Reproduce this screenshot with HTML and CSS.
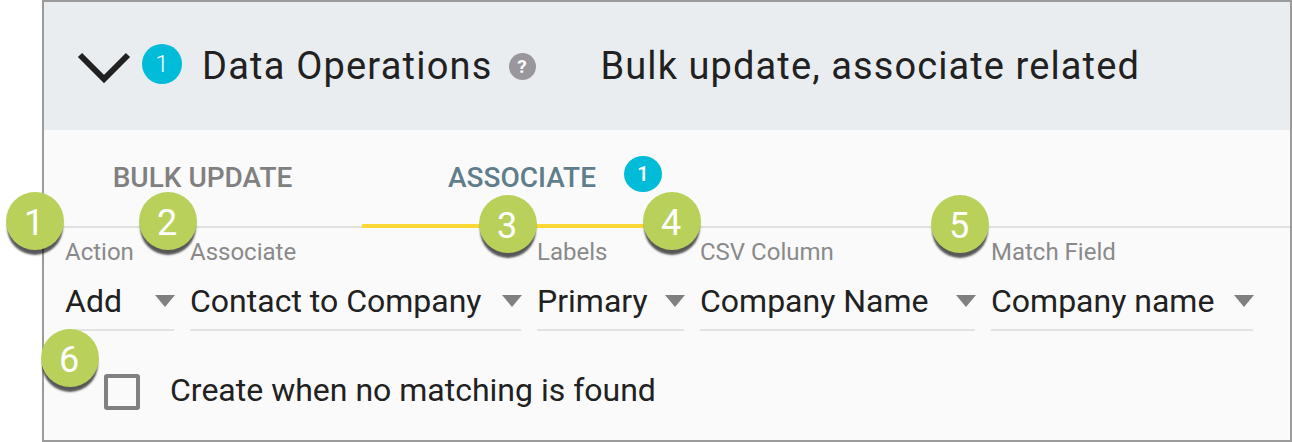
FILE: index.html
```html
<!DOCTYPE html>
<html lang="en">
<head>
	<meta charset="UTF-8">
	<title>Data Operations</title>
	<link rel="stylesheet" href="styles.css">
</head>
<body>
	<div class="panel">
		<div class="panel-head">
			<svg class="chevron" width="54" height="32" viewBox="0 0 54 32"><path d="M3 3 L27 27 L51 3" fill="none" stroke="#212121" stroke-width="6"/></svg>
			<span class="count count-lg">1</span>
			<span class="title">Data Operations</span>
			<span class="help">?</span>
			<span class="summary">Bulk update, associate related</span>
		</div>
		<div class="panel-body">
			<div class="tabs">
				<div class="tab tab-bulk">BULK UPDATE</div>
				<div class="tab tab-assoc active">ASSOCIATE<span class="count count-sm">1</span></div>
			</div>
			<div class="fields">
				<div class="field field-action">
					<label>Action</label>
					<div class="select"><span>Add</span><i class="caret"></i></div>
				</div>
				<div class="field field-assoc">
					<label>Associate</label>
					<div class="select"><span>Contact to Company</span><i class="caret"></i></div>
				</div>
				<div class="field field-labels">
					<label>Labels</label>
					<div class="select"><span>Primary</span><i class="caret"></i></div>
				</div>
				<div class="field field-csv">
					<label>CSV Column</label>
					<div class="select"><span>Company Name</span><i class="caret"></i></div>
				</div>
				<div class="field field-match">
					<label>Match Field</label>
					<div class="select"><span>Company name</span><i class="caret"></i></div>
				</div>
			</div>
			<div class="check-row">
				<span class="checkbox"></span>
				<span class="check-text">Create when no matching is found</span>
			</div>
		</div>
	</div>

	<div class="callout c1">1</div>
	<div class="callout c2">2</div>
	<div class="callout c3">3</div>
	<div class="callout c4">4</div>
	<div class="callout c5">5</div>
	<div class="callout c6">6</div>
</body>
</html>
```
FILE: styles.css
```css
* {
	margin: 0;
	padding: 0;
	box-sizing: border-box;
}
html, body {
	height: 100%;
	background: #fff;
	overflow: hidden;
}
body {
	font-family: Roboto, "Liberation Sans", sans-serif;
	position: relative;
}

.panel {
	width: 1250px;
	height: 442px;
	margin-left: 42px;
	border: 2px solid #9b9b9b;
	background: #fafafa;
	display: flex;
	flex-direction: column;
}

/* header */
.panel-head {
	height: 128px;
	background: #e9edf0;
	display: flex;
	align-items: center;
	padding-left: 33px;
}
.chevron {
	margin-top: 4px;
}
.count {
	display: inline-flex;
	align-items: center;
	justify-content: center;
	background: #00bcd9;
	color: #fff;
	border-radius: 50%;
}
.count-lg {
	width: 40px;
	height: 40px;
	font-size: 24px;
	font-weight: 300;
	margin-left: 11px;
	margin-top: -4px;
}
.title {
	font-size: 38px;
	color: #212121;
	margin-left: 20px;
	letter-spacing: 1.2px;
	white-space: nowrap;
}
.help {
	width: 27px;
	height: 27px;
	border-radius: 50%;
	background: #9a979c;
	color: #fff;
	font-size: 19px;
	font-weight: 700;
	display: flex;
	align-items: center;
	justify-content: center;
	margin-left: 16px;
}
.summary {
	font-size: 38px;
	color: #212121;
	margin-left: 65px;
	letter-spacing: 1.1px;
	white-space: nowrap;
}

/* tabs */
.tabs {
	height: 98px;
	display: flex;
	border-bottom: 2px solid #e0e0e0;
}
.tab {
	font-size: 28px;
	font-weight: 500;
	color: #808080;
	text-align: center;
	padding-top: 31px;
	white-space: nowrap;
}
.tab-bulk {
	width: 318px;
	padding-right: 1px;
}
.tab-assoc {
	width: 282px;
	height: 98px;
	padding-left: 38px;
	color: #607d8b;
	border-bottom: 4px solid #fdd835;
	position: relative;
}
.count-sm {
	position: absolute;
	left: 262px;
	top: 26px;
	width: 38px;
	height: 36px;
	font-size: 21px;
	font-weight: 500;
}

/* select row */
.fields {
	display: flex;
	gap: 16px;
	padding-left: 21px;
	margin-top: 9px;
}
.field label {
	display: block;
	font-size: 24px;
	color: #8a8a8a;
	height: 38px;
	line-height: 30px;
	white-space: nowrap;
}
.field-action { width: 109px; }
.field-assoc { width: 331px; }
.field-labels { width: 147px; }
.field-csv { width: 275px; }
.field-match { width: 262px; }
.select {
	height: 56px;
	display: flex;
	align-items: center;
	justify-content: space-between;
	border-bottom: 2px solid #e3e3e3;
	font-size: 32px;
	color: #212121;
	white-space: nowrap;
	padding-bottom: 2px;
}
.caret {
	width: 0;
	height: 0;
	border-left: 10.5px solid transparent;
	border-right: 10.5px solid transparent;
	border-top: 12px solid #808080;
	margin-right: -1px;
}

/* checkbox */
.check-row {
	display: flex;
	align-items: center;
	padding-left: 60px;
	margin-top: 42px;
}
.checkbox {
	width: 36px;
	height: 36px;
	border: 4px solid #808080;
	border-radius: 3px;
}
.check-text {
	font-size: 32px;
	color: #212121;
	margin-left: 30px;
	position: relative;
	top: -2px;
}

/* numbered callouts over the panel */
.callout {
	position: absolute;
	width: 58px;
	height: 58px;
	padding: 4px 2px 0 0;
	border-radius: 50%;
	background: #b9d15b;
	color: #fff;
	font-size: 36px;
	display: flex;
	align-items: center;
	justify-content: center;
	box-shadow: 0 6px 2px -1px rgba(0, 0, 0, 0.65);
}
.c1 { left: 6px; top: 192px; }
.c2 { left: 139px; top: 192px; }
.c3 { left: 479px; top: 195px; }
.c4 { left: 643px; top: 192px; }
.c5 { left: 931px; top: 195px; }
.c6 { left: 41px; top: 329px; }
```
